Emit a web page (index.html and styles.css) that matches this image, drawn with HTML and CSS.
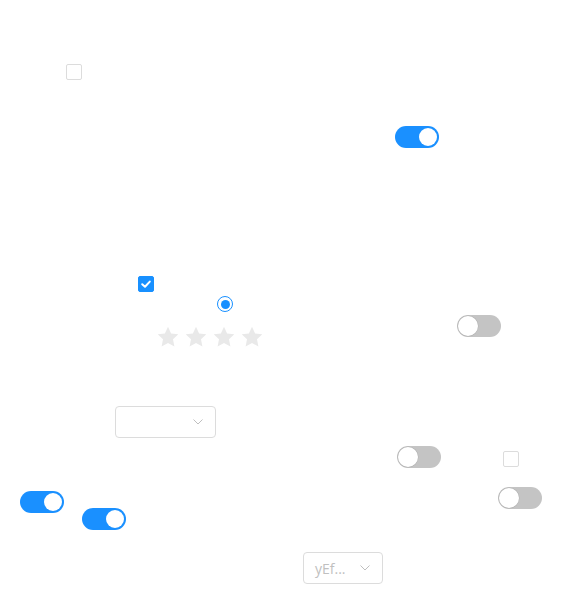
FILE: index.html
```html
<!DOCTYPE html>
<html>
<head>
<meta charset="utf-8">
<link rel="stylesheet" href="styles.css">
</head>
<body>
<div class="canvas">
  <span class="checkbox" style="left:66px;top:64px"></span>
  <span class="switch on" style="left:395px;top:126px"><span class="knob"></span></span>
  <span class="checkbox checked" style="left:138px;top:276px">
    <svg viewBox="0 0 16 16" width="16" height="16"><path d="M4.2 8.2 L7 10.8 L11.8 5.6" fill="none" stroke="#fff" stroke-width="2" stroke-linecap="round" stroke-linejoin="round"/></svg>
  </span>
  <span class="radio" style="left:217px;top:296px"><span class="dot"></span></span>
  <div class="rate" style="left:156px;top:325px">
    <svg class="star" viewBox="0 0 24 24"><path d="M12 1.8l3.1 6.6 7.2.9-5.3 5 1.4 7.2L12 18l-6.4 3.5L7 14.3l-5.3-5 7.2-.9z"/></svg>
    <svg class="star" viewBox="0 0 24 24"><path d="M12 1.8l3.1 6.6 7.2.9-5.3 5 1.4 7.2L12 18l-6.4 3.5L7 14.3l-5.3-5 7.2-.9z"/></svg>
    <svg class="star" viewBox="0 0 24 24"><path d="M12 1.8l3.1 6.6 7.2.9-5.3 5 1.4 7.2L12 18l-6.4 3.5L7 14.3l-5.3-5 7.2-.9z"/></svg>
    <svg class="star" viewBox="0 0 24 24"><path d="M12 1.8l3.1 6.6 7.2.9-5.3 5 1.4 7.2L12 18l-6.4 3.5L7 14.3l-5.3-5 7.2-.9z"/></svg>
  </div>
  <span class="switch" style="left:457px;top:315px"><span class="knob"></span></span>
  <div class="select" style="left:115px;top:406px;width:101px">
    <span class="value"></span>
    <svg class="arrow" viewBox="0 0 10 6" width="10" height="6"><path d="M0.5 0.5 L5 5 L9.5 0.5" fill="none" stroke="#bfbfbf" stroke-width="1"/></svg>
  </div>
  <span class="switch" style="left:397px;top:446px"><span class="knob"></span></span>
  <span class="checkbox" style="left:503px;top:451px"></span>
  <span class="switch on" style="left:20px;top:491px"><span class="knob"></span></span>
  <span class="switch on" style="left:82px;top:508px"><span class="knob"></span></span>
  <span class="switch" style="left:498px;top:487px"><span class="knob"></span></span>
  <div class="select" style="left:303px;top:552px;width:80px">
    <span class="value">yEf...</span>
    <svg class="arrow" viewBox="0 0 10 6" width="10" height="6"><path d="M0.5 0.5 L5 5 L9.5 0.5" fill="none" stroke="#bfbfbf" stroke-width="1"/></svg>
  </div>
</div>
</body>
</html>
```
FILE: styles.css
```css
html, body {
  margin: 0;
  padding: 0;
  background: #fff;
  font-family: "Open Sans", "Liberation Sans", sans-serif;
}
.canvas {
  position: relative;
  width: 588px;
  height: 616px;
  overflow: hidden;
}
.checkbox {
  position: absolute;
  box-sizing: border-box;
  width: 16px;
  height: 16px;
  border: 1px solid #dcdcdc;
  border-radius: 2px;
  background: #fff;
}
.checkbox.checked {
  background: #1890ff;
  border-color: #1890ff;
}
.checkbox.checked svg {
  position: absolute;
  left: -1px;
  top: -1px;
}
.switch {
  position: absolute;
  width: 44px;
  height: 22px;
  border-radius: 11px;
  background: #c4c4c4;
}
.switch .knob {
  position: absolute;
  left: 1px;
  top: 1px;
  width: 20px;
  height: 20px;
  border-radius: 50%;
  background: #fff;
  box-shadow: 0 0 0 0.5px #b0b0b0;
}
.switch.on {
  background: #1a90ff;
}
.switch.on .knob {
  left: 24px;
  top: 2px;
  width: 18px;
  height: 18px;
  box-shadow: none;
}
.radio {
  position: absolute;
  box-sizing: border-box;
  width: 16px;
  height: 16px;
  border: 1px solid #1890ff;
  border-radius: 50%;
  display: flex;
  align-items: center;
  justify-content: center;
}
.radio .dot {
  width: 9px;
  height: 9px;
  border-radius: 50%;
  background: #1890ff;
}
.rate {
  position: absolute;
  display: flex;
  gap: 4px;
}
.rate .star {
  width: 24px;
  height: 24px;
  fill: #e9e9e9;
}
.select {
  position: absolute;
  box-sizing: border-box;
  height: 32px;
  border: 1px solid #dcdcdc;
  border-radius: 4px;
  background: #fff;
  display: flex;
  align-items: center;
  justify-content: space-between;
  padding: 0 12px 0 11px;
}
.select .value {
  font-size: 14px;
  color: #c0c0c0;
}
.select .arrow {
  flex: none;
}
```
